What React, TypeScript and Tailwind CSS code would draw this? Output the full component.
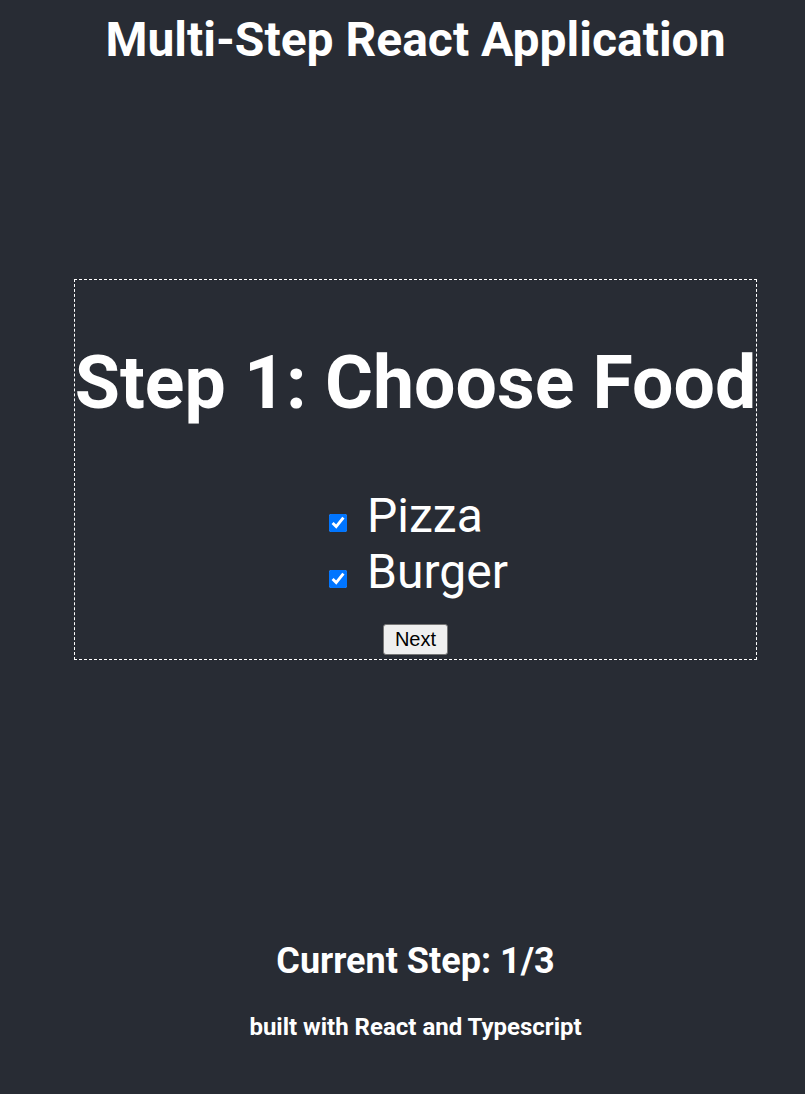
import React, { useState } from "react";

export default function App() {
  const [pizza, setPizza] = useState(true);
  const [burger, setBurger] = useState(true);
  return (
    <div
      className="min-h-[1094px] w-full bg-[#282c34] text-white flex flex-col items-center pl-[26px]"
      style={{ fontFamily: "Roboto, 'Noto Sans', sans-serif" }}
    >
      <h1 className="text-[48px] font-bold leading-[1.17] mt-[12px] text-center">
        Multi-Step React Application
      </h1>
      <div className="mt-[211px] border border-dashed border-white flex flex-col items-center pb-[4px]">
        <h2 className="text-[73.4px] font-bold leading-[1.17] mt-[61px] mb-[61px] whitespace-nowrap">
          Step 1: Choose Food
        </h2>
        <div className="flex flex-col items-start ml-[6px]">
          <label className="flex items-start text-[48px] leading-[1.17]">
            <input
              type="checkbox"
              checked={pizza}
              onChange={() => setPizza(!pizza)}
              className="w-[18px] h-[18px] mr-[20px] accent-[#0075ff] mt-[26px]"
            />
            Pizza
          </label>
          <label className="flex items-start text-[48px] leading-[1.17]">
            <input
              type="checkbox"
              checked={burger}
              onChange={() => setBurger(!burger)}
              className="w-[18px] h-[18px] mr-[20px] accent-[#0075ff] mt-[26px]"
            />
            Burger
          </label>
        </div>
        <button
          className="mt-[24px] bg-[#efefef] text-black border border-[#767676] rounded-[3px] px-[11px] h-[31px] text-[20px] leading-[23px]"
          style={{ fontFamily: "'Liberation Sans', Arial, sans-serif" }}
        >
          Next
        </button>
      </div>
      <h2 className="mt-[280px] text-[36px] font-bold leading-[1.17]">Current Step: 1/3</h2>
      <p className="mt-[31px] text-[24px] font-bold leading-[1.17]">built with React and Typescript</p>
    </div>
  );
}
